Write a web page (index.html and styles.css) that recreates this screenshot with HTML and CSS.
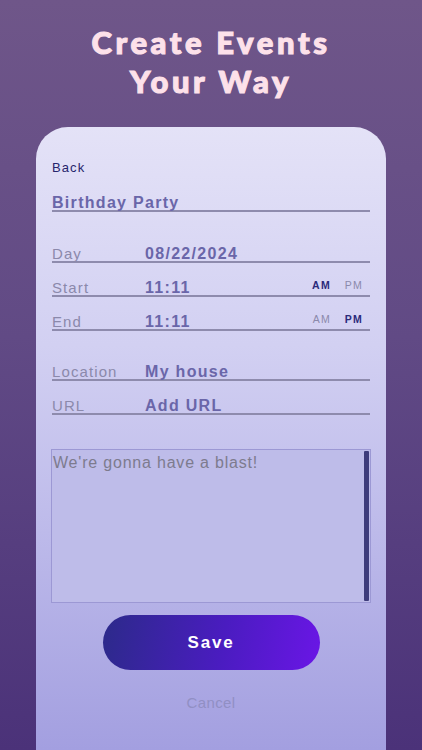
FILE: index.html
```html
<!DOCTYPE html>
<html lang="en">
<head>
<meta charset="utf-8">
<title>Create Events Your Way</title>
<link rel="stylesheet" href="styles.css">
</head>
<body>
  <h1 class="headline">Create Events<br>Your Way</h1>
  <main class="card">
    <div class="back">Back</div>
    <div class="field field-title"><span class="value">Birthday Party</span></div>

    <div class="field gap-top"><span class="label">Day</span><span class="value">08/22/2024</span></div>
    <div class="field"><span class="label">Start</span><span class="value">11:11</span>
      <span class="ampm"><span class="on">AM</span><span class="off">PM</span></span></div>
    <div class="field"><span class="label">End</span><span class="value">11:11</span>
      <span class="ampm"><span class="off">AM</span><span class="on">PM</span></span></div>

    <div class="field gap-top2"><span class="label">Location</span><span class="value">My house</span></div>
    <div class="field"><span class="label">URL</span><span class="value">Add URL</span></div>

    <div class="notes">
      <div class="notes-text">We're gonna have a blast!</div>
      <div class="scrollbar"></div>
    </div>

    <div class="btn-row"><button class="save">Save</button></div>
    <div class="cancel">Cancel</div>
  </main>
</body>
</html>
```
FILE: styles.css
```css
html, body {
  margin: 0;
  padding: 0;
}
body {
  width: 422px;
  height: 750px;
  overflow: hidden;
  background: linear-gradient(180deg, #6f5689 0%, #614a85 45%, #4b3279 100%);
  font-family: "Liberation Sans", Arial, sans-serif;
}
.headline {
  margin: 0;
  padding-top: 23px;
  text-align: center;
  font-family: Lato, "Liberation Sans", sans-serif;
  font-weight: 900;
  font-size: 31px;
  line-height: 39px;
  letter-spacing: 3.6px;
  color: #fde1ea;
  -webkit-text-stroke: 1.1px #fde1ea;
}
.card {
  box-sizing: border-box;
  width: 350px;
  height: 623px;
  margin: 26px 0 0 36px;
  padding: 33px 16px 0;
  border-radius: 32px 32px 0 0;
  background: linear-gradient(180deg, #e4e2f7 0%, #d2d0f2 35%, #bdbaea 65%, #a39fe0 100%);
}
.back {
  font-size: 13px;
  line-height: 16px;
  letter-spacing: 1.1px;
  color: #27256c;
}
.field {
  box-sizing: border-box;
  height: 34px;
  padding-top: 18px;
  display: flex;
  align-items: flex-end;
  border-bottom: 2px solid #8e8bad;
  line-height: 14px;
}
.field-title {
  margin-top: 2px;
}
.gap-top {
  margin-top: 17px;
}
.gap-top2 {
  margin-top: 16px;
}
.label {
  width: 93px;
  flex: none;
  font-size: 15px;
  letter-spacing: 1.1px;
  color: #8b89ab;
}
.value {
  font-size: 16px;
  font-weight: 700;
  letter-spacing: 1.3px;
  color: #6a66a9;
}
.ampm {
  margin-left: auto;
  margin-right: 7px;
  display: flex;
  gap: 14px;
  font-size: 10.5px;
  letter-spacing: 1.2px;
  padding-bottom: 3px;
}
.ampm .on {
  font-weight: 700;
  color: #2b2a7a;
}
.ampm .off {
  color: #8b89ab;
}
.notes {
  box-sizing: border-box;
  margin: 34px -1px 0;
  height: 154px;
  border: 1px solid #9c98d4;
  background: #bebce9;
  display: flex;
  padding: 1px;
}
.notes-text {
  flex: 1;
  padding-top: 3px;
  font-size: 16px;
  line-height: 18px;
  letter-spacing: 0.8px;
  color: #7d7b8e;
}
.scrollbar {
  width: 5px;
  border-radius: 1px;
  background: #3e3c7b;
}
.btn-row {
  display: flex;
  justify-content: center;
  margin-top: 12px;
}
.save {
  width: 217px;
  height: 55px;
  border: none;
  border-radius: 28px;
  background: linear-gradient(100deg, #2c2a8a 0%, #4a1cc0 55%, #6a16e6 100%);
  color: #ffffff;
  font-family: "Liberation Sans", Arial, sans-serif;
  font-weight: 700;
  font-size: 17px;
  letter-spacing: 1.8px;
  padding: 0;
}
.cancel {
  margin-top: 24px;
  text-align: center;
  font-size: 15px;
  line-height: 18px;
  letter-spacing: 0.4px;
  color: #918fc4;
}
```
